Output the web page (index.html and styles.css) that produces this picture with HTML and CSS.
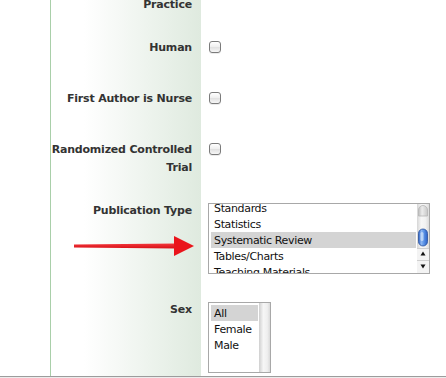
FILE: index.html
```html
<!DOCTYPE html>
<html>
<head>
<meta charset="utf-8">
<link rel="stylesheet" href="styles.css">
</head>
<body>
<div class="page">
  <div class="form">
    <div class="row tight">
      <div class="label">Practice</div>
      <div class="field"></div>
    </div>
    <div class="row">
      <div class="label">Human</div>
      <div class="field"><input type="checkbox" class="check"></div>
    </div>
    <div class="row">
      <div class="label">First Author is Nurse</div>
      <div class="field"><input type="checkbox" class="check"></div>
    </div>
    <div class="row tight">
      <div class="label">Randomized Controlled Trial</div>
      <div class="field"><input type="checkbox" class="check"></div>
    </div>
    <div class="row list">
      <div class="label">Publication Type</div>
      <div class="field">
        <div class="listbox listbox-wide">
          <ul class="options scrolled">
            <li>Standards</li>
            <li>Statistics</li>
            <li class="selected">Systematic Review</li>
            <li>Tables/Charts</li>
            <li>Teaching Materials</li>
          </ul>
          <div class="scrollbar">
            <svg width="12" height="69" viewBox="0 0 12 69">
              <defs>
                <linearGradient id="trk" x1="0" x2="1" y1="0" y2="0">
                  <stop offset="0" stop-color="#d6d6d6"/>
                  <stop offset="0.35" stop-color="#f7f7f7"/>
                  <stop offset="0.7" stop-color="#f2f2f2"/>
                  <stop offset="1" stop-color="#dcdcdc"/>
                </linearGradient>
                <linearGradient id="cap" x1="0" x2="1" y1="0" y2="0">
                  <stop offset="0" stop-color="#bdbdbd"/>
                  <stop offset="0.4" stop-color="#ececec"/>
                  <stop offset="1" stop-color="#c8c8c8"/>
                </linearGradient>
                <linearGradient id="thumb" x1="0" x2="1" y1="0" y2="0">
                  <stop offset="0" stop-color="#2a5fc4"/>
                  <stop offset="0.3" stop-color="#8fb8f2"/>
                  <stop offset="0.6" stop-color="#5b93e6"/>
                  <stop offset="1" stop-color="#2d62c8"/>
                </linearGradient>
              </defs>
              <rect x="0" y="0" width="12" height="69" fill="url(#trk)"/>
              <path d="M1.5 12 V6 a4.5 4.5 0 0 1 9 0 V12 Z" fill="url(#cap)" stroke="#b5b5b5" stroke-width="0.8"/>
              <rect x="1.5" y="25" width="9" height="17" rx="4.5" fill="url(#thumb)" stroke="#28509c" stroke-width="0.8"/>
              <rect x="3.5" y="28" width="3" height="9" rx="1.5" fill="#c9defa" opacity="0.8"/>
              <rect x="0" y="44" width="12" height="25" fill="#f3f3f3"/>
              <line x1="0" y1="44.5" x2="12" y2="44.5" stroke="#cfcfcf"/>
              <line x1="0" y1="56.5" x2="12" y2="56.5" stroke="#cfcfcf"/>
              <path d="M6 47.5 L8.5 51.5 H3.5 Z" fill="#111"/>
              <path d="M6 64.5 L8.5 60.5 H3.5 Z" fill="#111"/>
            </svg>
          </div>
        </div>
      </div>
    </div>
    <div class="row last">
      <div class="label">Sex</div>
      <div class="field">
        <div class="listbox listbox-narrow">
          <ul class="options padded">
            <li class="selected">All</li>
            <li>Female</li>
            <li>Male</li>
          </ul>
          <div class="track"></div>
        </div>
      </div>
    </div>
  </div>
  <div class="footer"></div>
  <svg class="arrow" width="122" height="22" viewBox="0 0 122 22">
    <defs>
      <linearGradient id="shaft" x1="0" x2="0" y1="0" y2="1">
        <stop offset="0" stop-color="#f2383c"/>
        <stop offset="1" stop-color="#d90f16"/>
      </linearGradient>
    </defs>
    <path d="M0 9.5 L102 8.5 V13.5 L0 12.5 Z" fill="url(#shaft)"/>
    <path d="M100 1 L120 11 L100 21 Z" fill="#ea141b"/>
  </svg>
</div>
</body>
</html>
```

FILE: styles.css
```css
html, body {
  margin: 0;
  padding: 0;
  background: #fff;
  overflow: hidden;
}

.page {
  position: relative;
  width: 446px;
  height: 378px;
  overflow: hidden;
  font-family: "DejaVu Sans", Verdana, sans-serif;
}

.form {
  margin: -5px 0 0 50px;
  border-left: 1px solid #a9cfa9;
}

.row {
  display: flex;
}

.label {
  flex: 0 0 150px;
  box-sizing: border-box;
  padding: 1px 9px 32px 0;
  background: linear-gradient(to right, #ffffff 22%, #dfeadf 100%);
  text-align: right;
  font-weight: bold;
  font-size: 11px;
  line-height: 18px;
  color: #333;
  letter-spacing: -0.2px;
}

.row.tight .label {
  padding-bottom: 24px;
}

.row.list .label,
.row.last .label {
  padding-bottom: 0;
}

.field {
  flex: 1;
  padding: 2px 0 0 7px;
}

.row.list .field {
  padding-bottom: 26px;
}

.row.last .field {
  padding-bottom: 3px;
}

.check {
  -webkit-appearance: none;
  appearance: none;
  display: block;
  width: 12px;
  height: 12px;
  margin: 1px 0 0 1px;
  box-sizing: border-box;
  border: 1px solid #7b7b7b;
  border-radius: 3px;
  background: linear-gradient(#ffffff, #f0f0f0 45%, #e2e2e2 55%, #f6f6f6);
  box-shadow: 0 1px 0 rgba(0,0,0,0.08);
}

.listbox {
  display: flex;
  box-sizing: border-box;
  height: 71px;
  border: 1px solid #a8a8a8;
  background: #fff;
  overflow: hidden;
}

.listbox-wide {
  width: 222px;
}

.listbox-narrow {
  width: 63px;
}

.options {
  flex: 1;
  list-style: none;
  margin: 0;
  padding: 0 1px 0 2px;
  font-size: 11px;
  line-height: 16px;
  letter-spacing: -0.35px;
  color: #111;
  overflow: hidden;
}

.options.scrolled {
  margin-top: -4px;
}

.options.padded {
  padding-top: 2px;
}

.options li {
  box-sizing: border-box;
  padding: 1px 0 0 3px;
  white-space: nowrap;
  height: 16px;
  line-height: 16px;
}

.options li.selected {
  background: #d4d4d4;
}

.scrollbar {
  flex: 0 0 12px;
  height: 69px;
}

.scrollbar svg {
  display: block;
}

.track {
  flex: 0 0 11px;
  background: linear-gradient(to right, #cfcfcf, #f6f6f6 40%, #efefef 75%, #dadada);
}

.footer {
  height: 2px;
  border-top: 1px solid #9c9c9c;
  background: #ececec;
}

.arrow {
  position: absolute;
  left: 74px;
  top: 235px;
}
```
